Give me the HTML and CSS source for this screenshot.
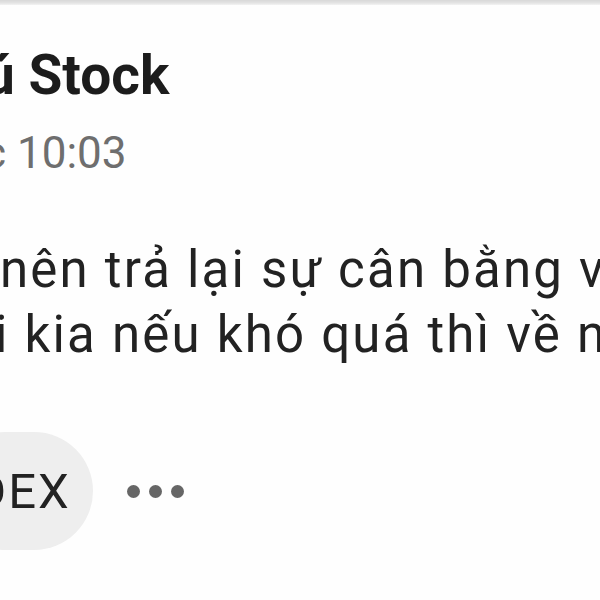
FILE: index.html
```html
<!DOCTYPE html>
<html lang="vi">
<head>
    <meta charset="UTF-8">
    <meta name="viewport" content="width=device-width, initial-scale=1.0">
    <title>Bài viết</title>
    <link rel="stylesheet" href="styles.css">
</head>
<body>
    <div class="top-bar"></div>

    <div class="post">
        <div class="post-author">ú Stock</div>
        <div class="post-time">c 10:03</div>

        <div class="post-text">
            <span class="line first">nên trả lại sự cân bằng với</span>
            <span class="line second">i kia nếu khó quá thì về nhé</span>
        </div>

        <div class="post-actions">
            <div class="tag-chip">DEX</div>
            <div class="more-button">
                <span class="dot"></span>
                <span class="dot"></span>
                <span class="dot"></span>
            </div>
        </div>
    </div>
</body>
</html>
```

FILE: styles.css
```css
body {
    font-family: Roboto, "Noto Sans", Arial, sans-serif;
    background-color: #fefefe;
    margin: 0;
    padding: 0;
    width: 600px;
    height: 600px;
    overflow: hidden;
}

.top-bar {
    height: 5px;
    background: linear-gradient(#d8d8d8, #e4e4e4 60%, #f3f3f3);
}

.post {
    display: flex;
    flex-direction: column;
    overflow: hidden;
}

.post-author {
    margin-top: 43px;
    margin-left: -16px;
    font-size: 55px;
    line-height: 55px;
    font-weight: 700;
    color: #1c1c1c;
    white-space: nowrap;
}

.post-time {
    margin-top: 28px;
    margin-left: -17px;
    font-size: 44px;
    line-height: 44px;
    color: #6e6e6e;
    white-space: nowrap;
}

.post-text {
    margin-top: 62px;
    font-size: 51px;
    line-height: 65px;
    letter-spacing: 2.2px;
    color: #222222;
}

.post-text .line {
    display: block;
    white-space: nowrap;
}

.post-text .first {
    margin-left: 0;
}

.post-text .second {
    margin-left: -5px;
}

.post-actions {
    margin-top: 65px;
    display: flex;
    align-items: center;
    gap: 34px;
}

.tag-chip {
    height: 118px;
    margin-left: -54px;
    padding: 0 22px 0 28px;
    border-radius: 59px;
    background-color: #eeeeee;
    display: flex;
    align-items: center;
    font-size: 49px;
    letter-spacing: 2px;
    color: #222222;
}

.more-button {
    display: flex;
    gap: 9px;
}

.more-button .dot {
    width: 13px;
    height: 13px;
    border-radius: 50%;
    background-color: #666666;
}
```
